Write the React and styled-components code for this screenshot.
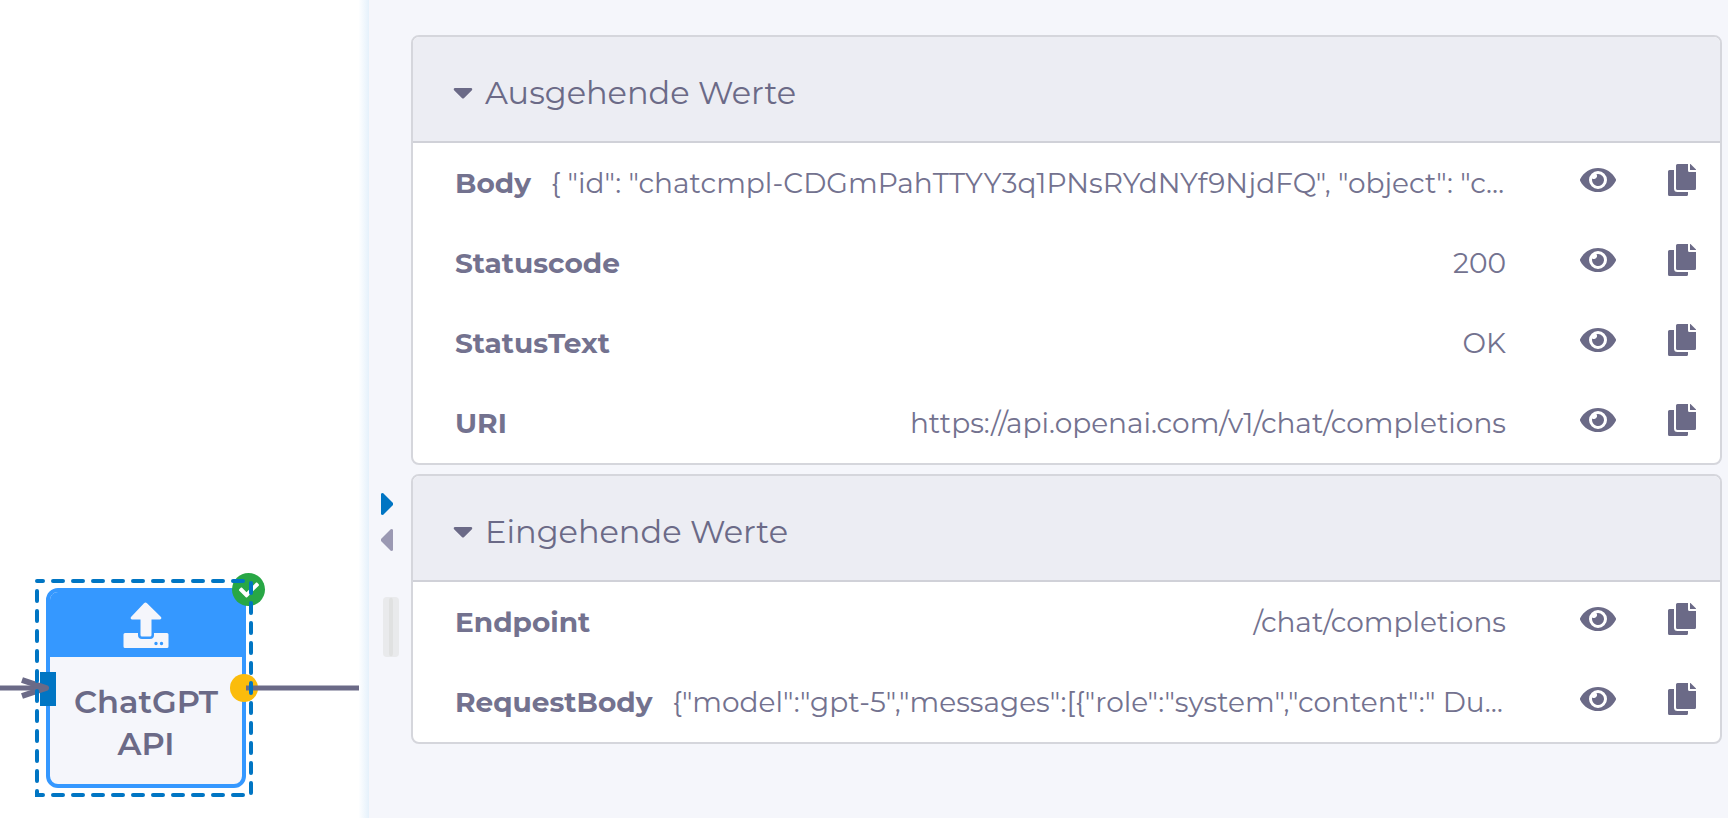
import React, { useState } from "react";
import styled, { createGlobalStyle } from "styled-components";
import { FaCaretDown, FaCheck, FaEye } from "react-icons/fa";

const outgoing = [
  {
    name: "Body",
    value:
      '{ "id": "chatcmpl-CDGmPahTTYY3q1PNsRYdNYf9NjdFQ", "object": "chat.completion" }',
  },
  { name: "Statuscode", value: "200" },
  { name: "StatusText", value: "OK" },
  { name: "URI", value: "https://api.openai.com/v1/chat/completions" },
];

const incoming = [
  { name: "Endpoint", value: "/chat/completions" },
  {
    name: "RequestBody",
    value:
      '{"model":"gpt-5","messages":[{"role":"system","content":" Du bist ein Assistent"}]}',
  },
];

const ValuePanel = ({ title, rows }) => {
  const [open, setOpen] = useState(true);
  return (
    <Panel>
      <PanelTitle>
        <PanelToggle
          type="button"
          aria-expanded={open}
          onClick={() => setOpen(!open)}
        >
          <FaCaretDown />
          {title}
        </PanelToggle>
      </PanelTitle>
      {open && (
        <Rows>
          {rows.map((row) => (
            <Row key={row.name}>
              <Name>{row.name}</Name>
              <Value>{row.value}</Value>
              <Actions>
                <IconButton type="button" aria-label={`${row.name} anzeigen`}>
                  <FaEye size={36} />
                </IconButton>
                <IconButton type="button" aria-label={`${row.name} kopieren`}>
                  <CopyIcon />
                </IconButton>
              </Actions>
            </Row>
          ))}
        </Rows>
      )}
    </Panel>
  );
};

const CopyIcon = () => (
  <svg width="28" height="32" viewBox="0 0 28 32" fill="currentColor">
    <path d="M20 28v2.500a1.500 1.500 0 0 1-1.500 1.500h-17A1.500 1.500 0 0 1 0 30.500v-23A1.500 1.500 0 0 1 1.500 6H6v18.500A3.500 3.500 0 0 0 9.500 28z" />
    <path d="M20 0v6.500A1.500 1.500 0 0 0 21.500 8H28v16.500a1.500 1.500 0 0 1-1.500 1.500h-17A1.500 1.500 0 0 1 8 24.500v-23A1.500 1.500 0 0 1 9.500 0z" />
    <path d="M22 0h.5L28 5.500V6h-6z" />
  </svg>
);

const UploadIcon = () => (
  <svg width="46" height="46" viewBox="0 0 46 46" fill="currentColor">
    <path d="M21 1.200q1.500-1.400 3 0L38 15q1 2-1 2.500h-8.500V33q0 1.500-1.500 1.500h-8q-1.500 0-1.500-1.500V17.500H9q-2-.5-1-2.500z" />
    <path
      fillRule="evenodd"
      d="M2 31h13v2q0 4 4 4h8q4 0 4-4v-2h13q1.500 0 1.500 1.500v12q0 1.500-1.500 1.500H2Q.5 46 .5 44.500v-12Q.5 31 2 31zm31 8.800a1.700 1.700 0 1 0 0 3.400 1.700 1.700 0 0 0 0-3.400zm5.500 0a1.700 1.700 0 1 0 0 3.400 1.700 1.700 0 0 0 0-3.400z"
    />
  </svg>
);

const App = () => {
  return (
    <>
      <GlobalStyle />
      <Page>
        <Canvas>
          <Node>
            <NodeHead>
              <UploadIcon />
            </NodeHead>
            <NodeLabel>ChatGPT API</NodeLabel>
          </Node>
          <Badge>
            <FaCheck size={20} />
          </Badge>
          <Edges>
            <rect x="40" y="672" width="16" height="34" fill="#0075c3" />
            <circle cx="244" cy="688" r="14" fill="#fbbc0c" />
            <g stroke="#6b6a87" strokeWidth="5" fill="none">
              <path d="M0 688H46" />
              <path
                d="M22 680L46 688L22 696"
                strokeWidth="6"
                strokeLinejoin="round"
              />
              <path d="M246 688H359" />
            </g>
            <rect
              x="37"
              y="581"
              width="214"
              height="214"
              fill="none"
              stroke="#0075c3"
              strokeWidth="4"
              strokeLinecap="round"
              strokeDasharray="10 10"
              strokeDashoffset="4"
            />
          </Edges>
        </Canvas>
        <Splitter>
          <Arrow type="button" aria-label="Rechts" $color="#0075c3">
            <svg width="12" height="22" viewBox="0 0 12 22">
              <path d="M0 1Q0 0 2 0L12 10V12L2 22Q0 22 0 21z" />
            </svg>
          </Arrow>
          <Arrow type="button" aria-label="Links" $color="#9b99b3">
            <svg width="12" height="22" viewBox="0 0 12 22">
              <path d="M12 1Q12 0 10 0L0 10V12L10 22Q12 22 12 21z" />
            </svg>
          </Arrow>
          <Grip>
            <span />
            <span />
          </Grip>
        </Splitter>
        <Details>
          <ValuePanel title="Ausgehende Werte" rows={outgoing} />
          <ValuePanel title="Eingehende Werte" rows={incoming} />
        </Details>
      </Page>
    </>
  );
};

export default App;

const GlobalStyle = createGlobalStyle`
  * {
    box-sizing: border-box;
  }
  body {
    margin: 0;
    background: #f5f6fb;
    color: #6b6a87;
    font-family: Montserrat, Inter, sans-serif;
  }
  button {
    padding: 0;
    border: 0;
    background: none;
    color: inherit;
    font: inherit;
    cursor: pointer;
  }
  svg {
    display: block;
  }
`;

const Page = styled.div`
  display: flex;
  min-height: 100vh;
`;

const Canvas = styled.div`
  position: relative;
  flex: 0 0 369px;
  overflow: hidden;
  background: #fff;

  &::after {
    content: "";
    position: absolute;
    inset: 0 0 0 auto;
    width: 10px;
    background: linear-gradient(to right, #fdfeff, #e5f1fb);
  }
`;

const Node = styled.div`
  position: absolute;
  left: 46px;
  top: 588px;
  width: 200px;
  height: 200px;
  display: flex;
  flex-direction: column;
  overflow: hidden;
  border: 4px solid #3598ff;
  border-radius: 12px;
  background: #f5f6fb;
`;

const NodeHead = styled.div`
  display: flex;
  justify-content: center;
  align-items: center;
  flex: 0 0 65px;
  background: #3598ff;
  color: #f5f6fb;
`;

const NodeLabel = styled.div`
  padding: 24px 16px;
  font-size: 32px;
  font-weight: 600;
  line-height: 42px;
  text-align: center;
`;

const Badge = styled.div`
  position: absolute;
  left: 232px;
  top: 573px;
  width: 33px;
  height: 33px;
  display: flex;
  align-items: center;
  justify-content: center;
  border-radius: 50%;
  background: #28a745;
  color: #fff;
`;

const Edges = styled.svg`
  position: absolute;
  inset: 0;
  width: 100%;
  height: 100%;
`;

const Splitter = styled.div`
  flex: 0 0 42px;
  display: flex;
  flex-direction: column;
  align-items: flex-start;
  padding: 493px 0 0 12px;
`;

const Arrow = styled.button`
  margin-bottom: 14px;
  fill: ${(props) => props.$color};
`;

const Grip = styled.div`
  display: flex;
  margin: 32px 0 0 2px;

  span {
    width: 10px;
    height: 60px;
    border-radius: 4px;
    background: rgba(200, 200, 190, 0.25);
  }
  span + span {
    margin-left: -4px;
  }
`;

const Details = styled.main`
  flex: 1;
  min-width: 0;
  display: flex;
  flex-direction: column;
  gap: 9px;
  padding: 35px 6px 35px 0;
`;

const Panel = styled.section`
  overflow: hidden;
  border: 2px solid #d5d6dc;
  border-radius: 8px;
  background: #fff;
`;

const PanelTitle = styled.h2`
  margin: 0;
  font-size: 32px;
  font-weight: 400;
`;

const PanelToggle = styled.button`
  width: 100%;
  height: 106px;
  display: flex;
  align-items: center;
  gap: 6px;
  padding: 6px 34px 0;
  border-bottom: 2px solid #d0d1d8;
  background: #ecedf3;
`;

const Rows = styled.div`
  padding: 0 24px 0 42px;
`;

const Row = styled.div`
  display: flex;
  align-items: center;
  height: 80px;
  color: #73728f;
  font-size: 28px;
`;

const Name = styled.span`
  margin-right: 20px;
  font-weight: 700;
`;

const Value = styled.span`
  flex: 1;
  min-width: 0;
  overflow: hidden;
  font-weight: 400;
  text-align: right;
  text-overflow: ellipsis;
  white-space: nowrap;
`;

const Actions = styled.div`
  display: flex;
  align-items: center;
  gap: 52px;
  margin-left: 74px;
  padding-bottom: 6px;
`;

const IconButton = styled.button`
  color: #6b6a87;
`;
